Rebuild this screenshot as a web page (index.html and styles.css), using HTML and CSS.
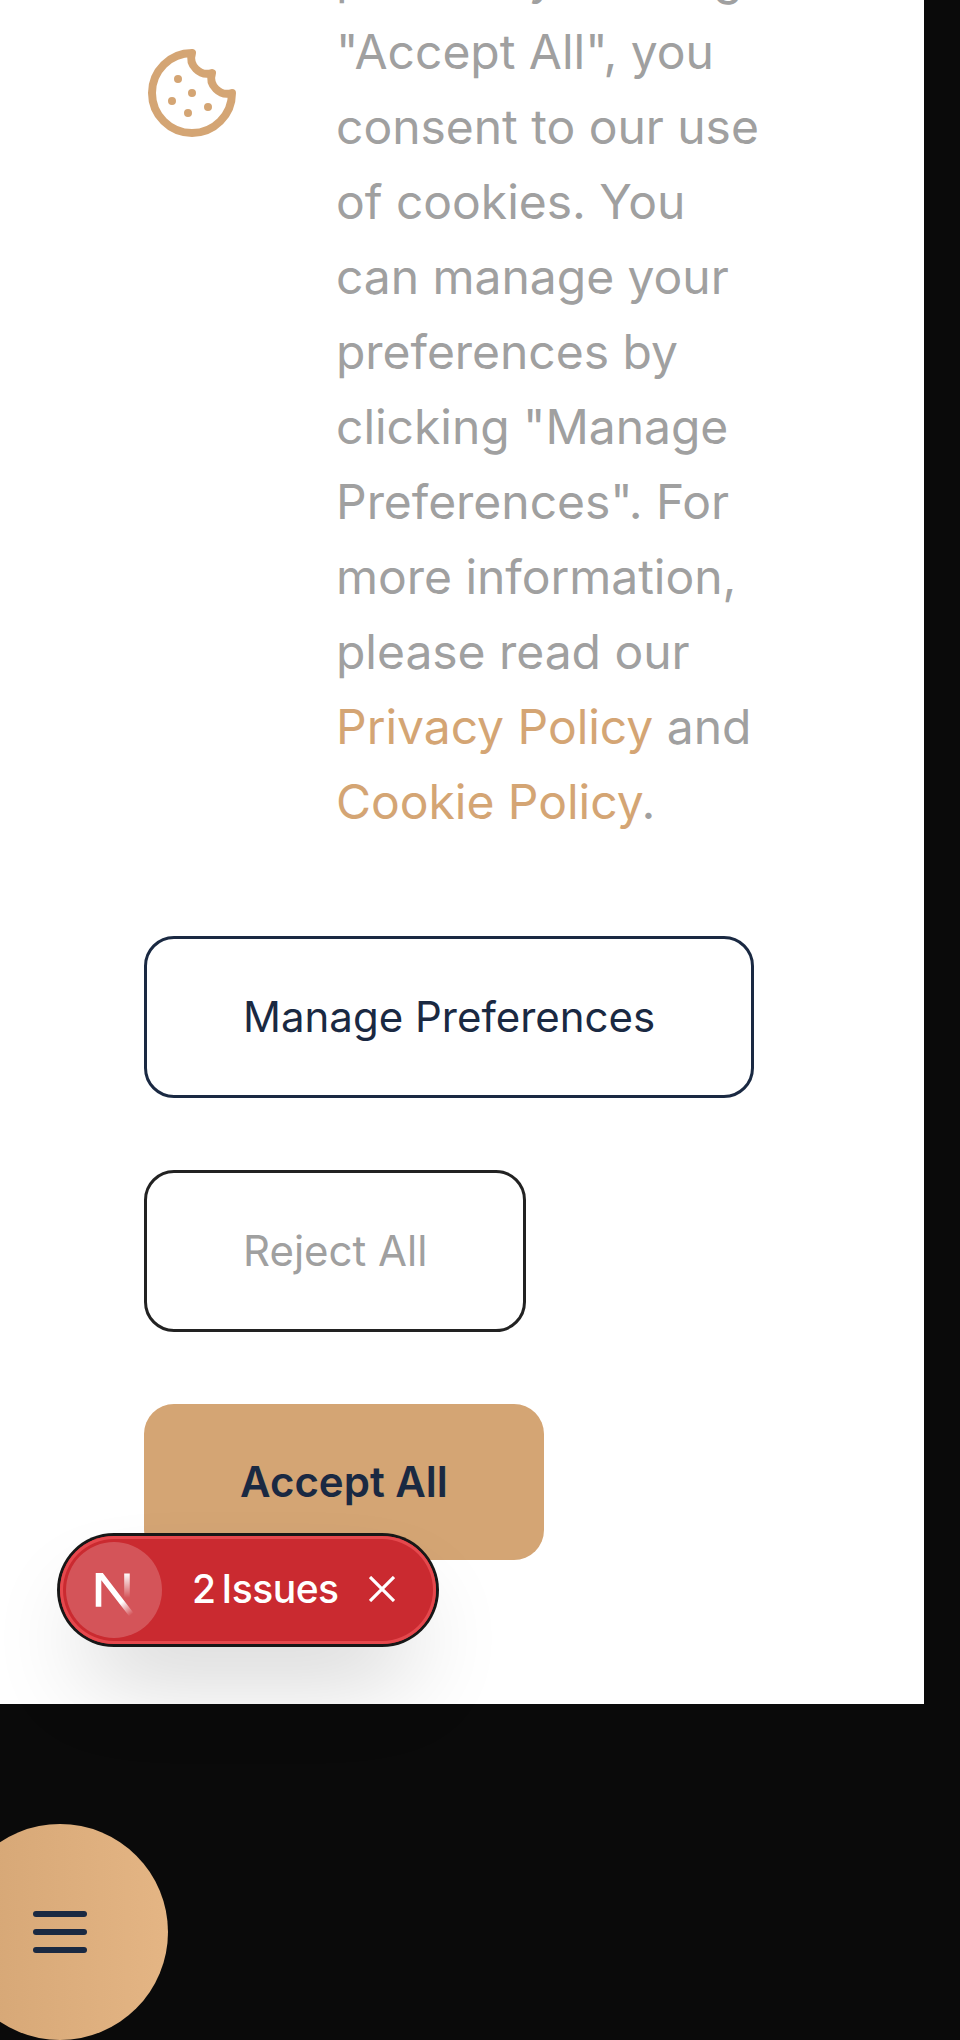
FILE: index.html
```html
<!DOCTYPE html>
<html lang="en">
<head>
<meta charset="utf-8">
<title>Cookie consent</title>
<link rel="stylesheet" href="styles.css">
</head>
<body>
<main class="page">
  <section class="consent">
    <div class="intro">
      <svg class="cookie" viewBox="0 0 24 24" fill="none" stroke="currentColor" stroke-width="2" stroke-linecap="round" stroke-linejoin="round">
        <path d="M12 2a10 10 0 1 0 10 10 4 4 0 0 1-5-5 4 4 0 0 1-5-5"/>
        <path d="M8.5 8.5v.01M16 15.5v.01M12 12v.01M11 17v.01M7 14v.01"/>
      </svg>
      <p class="message">prefer. By clicking<br>"Accept All", you<br>consent to our use<br>of cookies. You<br>can manage your<br>preferences by<br>clicking "Manage<br>Preferences". For<br>more information,<br>please read our<br><a class="link">Privacy Policy</a> and<br><a class="link">Cookie Policy</a>.</p>
    </div>
    <div class="actions">
      <button class="btn btn-manage">Manage Preferences</button>
      <button class="btn btn-reject">Reject All</button>
      <button class="btn btn-accept">Accept All</button>
    </div>
  </section>
  <button class="menu" aria-label="Menu">
    <span class="bar"></span><span class="bar"></span><span class="bar"></span>
  </button>
  <aside class="issues">
    <span class="mark">
      <svg class="mark-svg" viewBox="0 0 32 32" fill="none">
        <defs>
          <linearGradient id="diag" x1="9.95555" y1="11.1226" x2="15.4778" y2="17.9671" gradientUnits="userSpaceOnUse">
            <stop stop-color="#fff"/><stop offset=".604072" stop-color="#fff" stop-opacity="0"/><stop offset="1" stop-color="#fff" stop-opacity="0"/>
          </linearGradient>
          <linearGradient id="stem" x1="11.8222" y1="1.40039" x2="11.792" y2="9.62542" gradientUnits="userSpaceOnUse">
            <stop stop-color="#fff"/><stop offset="1" stop-color="#fff" stop-opacity="0"/>
          </linearGradient>
          <clipPath id="flat-top"><rect x="0" y="1.33" width="20" height="18"/></clipPath>
        </defs>
        <g transform="translate(8.5 9)" stroke-width="1.86" clip-path="url(#flat-top)">
          <path d="M13.3 15.2 2.34 1v11.6" stroke="url(#diag)"/>
          <path d="M11.825 1.5v11.6" stroke="url(#stem)"/>
        </g>
      </svg>
    </span>
    <span class="issues-label"><span>2</span><span>Issues</span></span>
    <svg class="close" viewBox="0 0 26 26" fill="none" stroke="#fff" stroke-width="3.2" stroke-linecap="butt">
      <path d="M1 1l24 24M25 1 1 25"/>
    </svg>
  </aside>
</main>
</body>
</html>
```

FILE: styles.css
```css
body {
  margin: 0;
  background: #0a0a0a;
  font-family: Inter, "Liberation Sans", sans-serif;
}

.page {
  position: relative;
  width: 960px;
  height: 2040px;
  overflow: hidden;
}

.consent {
  box-sizing: border-box;
  width: 924px;
  height: 1704px;
  padding: 0 144px 144px;
  display: flex;
  flex-direction: column;
  justify-content: flex-end;
  gap: 97px;
  background: #fff;
}

.intro {
  display: flex;
  align-items: flex-start;
  gap: 96px;
}

.cookie {
  flex: none;
  width: 96px;
  height: 96px;
  margin-top: 106px;
  color: #d4a574;
}

.message {
  margin: 0;
  font-size: 48px;
  line-height: 75px;
  letter-spacing: -0.03px;
  white-space: nowrap;
  color: #a0a0a0;
}

.link {
  color: #d4a574;
}

.actions {
  display: flex;
  flex-direction: column;
  align-items: flex-start;
  gap: 72px;
}

.btn {
  padding: 48px 96px;
  border: 3px solid;
  border-radius: 30px;
  background: transparent;
  font-family: inherit;
  font-size: 42px;
  line-height: 60px;
  white-space: nowrap;
}

.btn-manage {
  color: #1a2942;
}

.btn-reject {
  border-color: #222;
  color: #a0a0a0;
}

.btn-accept {
  border: 0;
  background: #d4a574;
  color: #1a2942;
  font-weight: 600;
}

.menu {
  width: 216px;
  height: 216px;
  margin: 120px 0 0 -48px;
  padding: 0;
  display: flex;
  flex-direction: column;
  align-items: center;
  justify-content: center;
  gap: 12px;
  border: 0;
  border-radius: 50%;
  background: linear-gradient(90deg, #d4a574, #e4b584);
}

.bar {
  width: 54px;
  height: 6px;
  border-radius: 3px;
  background: #1a2942;
}

/* Floating badge over the consent card */
.issues {
  position: absolute;
  left: 60px;
  top: 1536px;
  box-sizing: border-box;
  width: 376px;
  height: 108px;
  padding: 0 41px 0 6px;
  display: flex;
  align-items: center;
  border-radius: 54px;
  background: #ca2a30;
  color: #fff;
  box-shadow: 0 0 0 3px #171717, inset 0 0 0 3px #e5484d, 0 48px 96px -24px rgba(0, 0, 0, 0.24);
}

.mark {
  width: 96px;
  height: 96px;
  border-radius: 50%;
  background: rgba(255, 255, 255, 0.2);
}

.mark-svg {
  display: block;
  width: 96px;
  height: 96px;
}

.issues-label {
  display: flex;
  gap: 6px;
  margin: 0 0 2px 30px;
  font-size: 39px;
  font-weight: 500;
  line-height: 106px;
  letter-spacing: -0.5px;
}

.close {
  width: 26px;
  height: 26px;
  margin: 0 0 2px auto;
}
```
